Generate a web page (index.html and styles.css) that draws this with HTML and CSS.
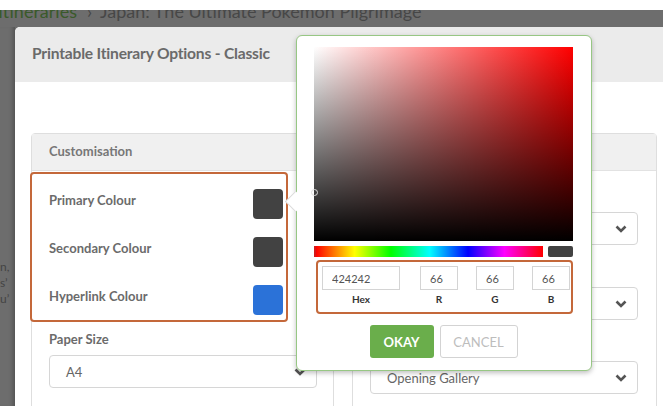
FILE: index.html
```html
<!DOCTYPE html>
<html lang="en">
<head>
    <meta charset="UTF-8">
    <meta name="viewport" content="width=device-width, initial-scale=1.0">
    <title>Printable Itinerary Options</title>
    <link rel="stylesheet" href="styles.css">
</head>
<body>

    <div class="screen">
        <div class="backdrop">
            <div class="crumbs">
                <div class="crumbs-line"><span class="crumb-link">Itineraries</span><span class="crumb-sep">&rsaquo;</span>Japan: The Ultimate Pokemon Pilgrimage</div>
            </div>

            <div class="stage">
                <div class="page-edge">
                    <span>n,</span>
                    <span>s&#x2019;</span>
                    <span>u&#x2019;</span>
                </div>

                <div class="modal">
                    <div class="modal-header">Printable Itinerary Options - Classic</div>

                    <div class="modal-body">
                        <div class="card">
                            <div class="card-header">Customisation</div>
                            <div class="card-body">
                                <div class="colour-list highlight">
                                    <div class="colour-row">
                                        <span>Primary Colour</span>
                                        <span class="swatch swatch-dark"></span>
                                    </div>
                                    <div class="colour-row">
                                        <span>Secondary Colour</span>
                                        <span class="swatch swatch-dark"></span>
                                    </div>
                                    <div class="colour-row">
                                        <span>Hyperlink Colour</span>
                                        <span class="swatch swatch-blue"></span>
                                    </div>
                                </div>

                                <div class="field">
                                    <label class="field-label">Paper Size</label>
                                    <div class="select">
                                        <span>A4</span>
                                        <svg class="chevron" viewBox="0 0 12 8"><path d="M1.5 1.5 L6 6 L10.5 1.5"/></svg>
                                    </div>
                                </div>
                            </div>
                        </div>

                        <div class="card">
                            <div class="card-header">Layout</div>
                            <div class="card-body card-body-right">
                                <div class="field">
                                    <label class="field-label">Font</label>
                                    <div class="select">
                                        <span>Lato</span>
                                        <svg class="chevron" viewBox="0 0 12 8"><path d="M1.5 1.5 L6 6 L10.5 1.5"/></svg>
                                    </div>
                                </div>
                                <div class="field">
                                    <label class="field-label">Date Format</label>
                                    <div class="select">
                                        <span>Day Month Year</span>
                                        <svg class="chevron" viewBox="0 0 12 8"><path d="M1.5 1.5 L6 6 L10.5 1.5"/></svg>
                                    </div>
                                </div>
                                <div class="field">
                                    <label class="field-label">Cover Page</label>
                                    <div class="select">
                                        <span>Opening Gallery</span>
                                        <svg class="chevron" viewBox="0 0 12 8"><path d="M1.5 1.5 L6 6 L10.5 1.5"/></svg>
                                    </div>
                                </div>
                            </div>
                        </div>
                    </div>
                </div>
            </div>
        </div>

        <!-- colour picker popover, opened from the primary colour swatch -->
        <div class="picker">
            <span class="picker-arrow"></span>
            <div class="sv-area">
                <span class="sv-handle"></span>
            </div>
            <div class="hue-row">
                <div class="hue-bar"></div>
                <div class="preview"></div>
            </div>
            <div class="values highlight">
                <div class="value-col value-hex">
                    <input type="text" value="424242">
                    <span>Hex</span>
                </div>
                <div class="value-col">
                    <input type="text" value="66">
                    <span>R</span>
                </div>
                <div class="value-col">
                    <input type="text" value="66">
                    <span>G</span>
                </div>
                <div class="value-col">
                    <input type="text" value="66">
                    <span>B</span>
                </div>
            </div>
            <div class="picker-buttons">
                <button type="button" class="btn-okay">OKAY</button>
                <button type="button" class="btn-cancel">CANCEL</button>
            </div>
        </div>
    </div>

</body>
</html>
```

FILE: styles.css
```css
body {
    margin: 0;
    background-color: white;
    font-family: Lato, "Open Sans", sans-serif;
    overflow: hidden;
}

.screen {
    position: relative;
    width: 670px;
    height: 411px;
    padding: 10px 7px 5px 0;
    box-sizing: border-box;
}

.backdrop {
    height: 100%;
    background-color: #6d6d6d;
    display: flex;
    flex-direction: column;
    overflow: hidden;
}

/* breadcrumb of the page behind the modal */
.crumbs {
    height: 17px;
    overflow: hidden;
    flex-shrink: 0;
}

.crumbs-line {
    margin-top: -8px;
    margin-left: -2px;
    font-size: 18px;
    line-height: 18px;
    color: #474747;
    white-space: nowrap;
}

.crumb-link {
    color: #3a5a2a;
}

.crumb-sep {
    margin: 0 8px 0 10px;
}

.stage {
    flex: 1;
    display: flex;
    min-height: 0;
}

.page-edge {
    width: 15px;
    flex-shrink: 0;
    display: flex;
    flex-direction: column;
    padding-top: 232px;
    font-size: 12px;
    line-height: 16px;
    color: #444;
    overflow: hidden;
    box-shadow: inset -5px 0 4px -3px rgba(0, 0, 0, 0.25);
}

.modal {
    flex: 1;
    background-color: white;
    border-top-left-radius: 5px;
    overflow: hidden;
}

.modal-header {
    height: 55px;
    background-color: #ebebeb;
    padding-left: 17px;
    font-size: 15.6px;
    font-weight: bold;
    line-height: 53px;
    color: #6a6a6a;
    letter-spacing: -0.2px;
}

.modal-body {
    display: flex;
    gap: 18px;
    padding: 51px 0 0 16px;
}

.card {
    width: 303px;
    height: 300px;
    border: 1px solid #dedede;
    border-radius: 4px 4px 0 0;
    box-sizing: border-box;
}

.card + .card {
    width: 305px;
}

.card-header {
    height: 36px;
    background-color: #f0f0f0;
    border-bottom: 1px solid #e2e2e2;
    padding-left: 17px;
    font-size: 13px;
    font-weight: bold;
    line-height: 35px;
    color: #777;
}

.card-body {
    padding-top: 1px;
}

.highlight {
    border: 2px solid #c4683a;
    border-radius: 4px;
}

.colour-list {
    width: 258px;
    height: 150px;
    margin-left: -2px;
    box-sizing: border-box;
    padding: 15px 3px 0 17px;
    display: flex;
    flex-direction: column;
    gap: 18px;
}

.colour-row {
    display: flex;
    justify-content: space-between;
    align-items: flex-start;
    height: 30px;
    font-size: 13px;
    font-weight: bold;
    line-height: 16px;
    color: #6b6b6b;
}

.colour-row span:first-child {
    margin-top: 3px;
}

.swatch {
    width: 30px;
    height: 30px;
    border-radius: 4px;
}

.swatch-dark {
    background-color: #424242;
}

.swatch-blue {
    background-color: #2b72d8;
}

.field {
    padding: 0 0 0 17px;
}

.field-label {
    display: block;
    height: 24px;
    padding-top: 9px;
    font-size: 13px;
    font-weight: bold;
    color: #6b6b6b;
}

.select {
    width: 268px;
    height: 33px;
    border: 1px solid #d6d6d6;
    border-radius: 4px;
    box-sizing: border-box;
    display: flex;
    align-items: center;
    justify-content: space-between;
    padding: 0 10px 0 16px;
    font-size: 13px;
    color: #666;
}

.chevron {
    width: 12px;
    height: 8px;
    fill: none;
    stroke: #555;
    stroke-width: 2.6;
}

.card-body-right .field {
    height: 74px;
    padding-top: 7px;
    box-sizing: border-box;
}

.card-body-right .field:first-child {
    height: 75px;
}

/* colour picker */
.picker {
    position: absolute;
    left: 296px;
    top: 35px;
    width: 296px;
    height: 336px;
    box-sizing: border-box;
    background-color: white;
    border: 1.5px solid #97c784;
    border-radius: 6px;
    box-shadow: 0 2px 5px rgba(0, 0, 0, 0.25);
    padding: 11px 18px 0 17px;
}

.picker-arrow {
    position: absolute;
    left: -9px;
    top: 158px;
    width: 14px;
    height: 14px;
    background-color: white;
    border-left: 1px solid #d9d9d9;
    border-bottom: 1px solid #d9d9d9;
    transform: rotate(45deg);
}

.sv-area {
    position: relative;
    height: 194px;
    background:
        linear-gradient(to top, #000, rgba(0, 0, 0, 0)),
        linear-gradient(to right, #fff, #f00);
}

.sv-handle {
    position: absolute;
    left: -3px;
    top: 142px;
    width: 5px;
    height: 5px;
    border: 1.5px solid #ddd;
    border-radius: 50%;
}

.hue-row {
    display: flex;
    gap: 5px;
    margin-top: 5px;
    height: 11px;
}

.hue-bar {
    flex: 1;
    background: linear-gradient(to right, #f00, #ff0 17%, #0f0 33%, #0ff 50%, #00f 67%, #f0f 83%, #f00);
    border-left: 2px solid #d21a1a;
}

.preview {
    width: 25px;
    background-color: #424242;
    border-radius: 2px;
}

.values {
    display: flex;
    height: 54px;
    margin: 3px 0 0 2px;
    padding: 4px 0 0 4px;
    box-sizing: border-box;
    width: 257px;
    gap: 18px;
}

.value-col {
    display: flex;
    flex-direction: column;
    align-items: center;
    width: 38px;
}

.value-hex {
    width: 78px;
    margin-right: 2px;
}

.value-col input {
    width: 100%;
    height: 24px;
    box-sizing: border-box;
    border: 1px solid #d4d4d4;
    padding: 0 0 0 9px;
    font-family: Lato, sans-serif;
    font-size: 11px;
    color: #555;
    outline: none;
}

.value-col span {
    margin-top: 3px;
    font-size: 10px;
    font-weight: bold;
    color: #333;
}

.picker-buttons {
    display: flex;
    justify-content: center;
    gap: 6px;
    margin-top: 11px;
}

.picker-buttons button {
    height: 33px;
    border-radius: 3px;
    font-family: Lato, sans-serif;
    font-size: 13px;
    cursor: pointer;
}

.btn-okay {
    width: 64px;
    background-color: #6aae4b;
    border: none;
    color: white;
    font-weight: bold;
}

.btn-cancel {
    width: 78px;
    background-color: white;
    border: 1.5px solid #d3d3d3;
    color: #bdbdbd;
}
```
